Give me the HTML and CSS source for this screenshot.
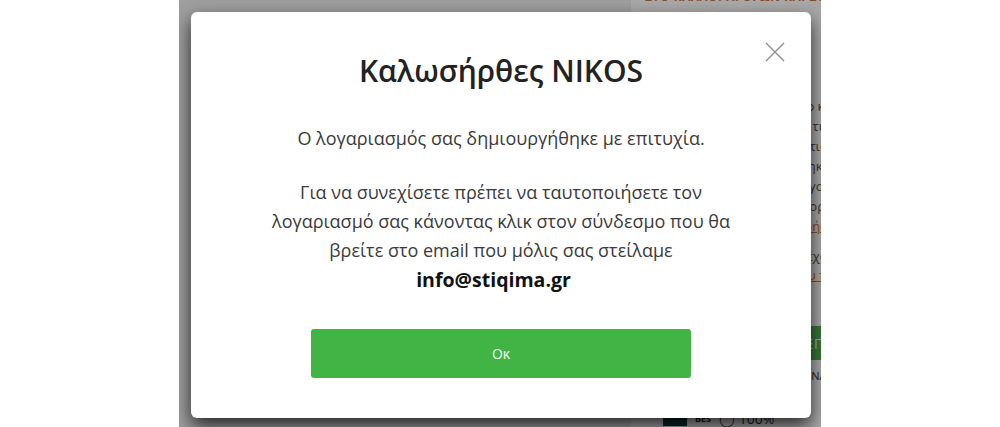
FILE: index.html
```html
<!DOCTYPE html>
<html lang="el">
<head>
<meta charset="utf-8">
<title>Καλωσήρθες</title>
<link rel="stylesheet" href="styles.css">
</head>
<body>
<div class="stage">
  <div class="page">
    <div class="main"></div>
    <aside class="sidebar">
      <div class="sb-head">ΣΤΟ ΚΑΛΑΘΙ ΑΓΟΡΩΝ ΚΑΙ ΣΤΑ ΑΓΑΠΗΜΕΝΑ</div>
      <div class="sb-text">
        <div class="sb-line">Με την εγγραφή σας στο κατάστημα με</div>
        <div class="sb-line">θα μπορείτε να βλέπετε τις παραγγελίες σας</div>
        <div class="sb-line">και να παρακολουθείτε τις αγορές των</div>
        <div class="sb-line">προϊόντων και να αποθηκεύετε τις αγορές σας</div>
        <div class="sb-line">ευκολότερα και πιο γρήγορα από τη λίστα στη</div>
        <div class="sb-line">να ολοκληρώνετε τις αγορές πιο γρήγορα στα</div>
        <div class="sb-line sb-link">Διαβάστε τους όρους χρήσης του</div>
        <div class="sb-line sb-gap">Έχω διαβάσει και αποδέχομαι τους όρους και</div>
        <div class="sb-line sb-link">την πολιτική απορρήτου του καταστήματος</div>
      </div>
      <div class="sb-btn">ΕΓΓΡΑΦΗ ΤΩΡΑ</div>
      <div class="sb-note">ΑΣΦΑΛΕΙΣ ΣΥΝΑΛΛΑΓΕΣ ΧΩΡΙΣ ΕΝ</div>
      <div class="sb-badges"><span class="badge-box"></span><span class="badge-txt">BES</span><span class="badge-pct">◯ 100%</span></div>
    </aside>
  </div>
  <div class="overlay"></div>
  <div class="modal">
    <button class="close" aria-label="Κλείσιμο">
      <svg width="20" height="20" viewBox="0 0 20 20"><path d="M1 1 L19 19 M19 1 L1 19" stroke="#8f8f8f" stroke-width="1.4" fill="none"/></svg>
    </button>
    <h2 class="title">Καλωσήρθες NIKOS</h2>
    <p class="msg">Ο λογαριασμός σας δημιουργήθηκε με επιτυχία.</p>
    <p class="msg msg2">Για να συνεχίσετε πρέπει να ταυτοποιήσετε τον<br>λογαριασμό σας κάνοντας κλικ στον σύνδεσμο που θα<br>βρείτε στο email που μόλις σας στείλαμε<br><strong class="email">info@stiqima.gr</strong></p>
    <button class="ok">Οκ</button>
  </div>
</div>
</body>
</html>
```
FILE: styles.css
```css
html, body {
  margin: 0;
  padding: 0;
  background: #ffffff;
}
body {
  font-family: "Open Sans", "Noto Sans", sans-serif;
}
.stage {
  position: relative;
  width: 642px;
  height: 427px;
  margin: 0 auto;
  overflow: hidden;
  background: #ffffff;
}
.page {
  display: flex;
  height: 100%;
}
.main {
  width: 452px;
  flex: none;
  background: #f0f0f0;
}
.sidebar {
  flex: 1;
  background: #ffffff;
  padding-left: 14px;
  white-space: nowrap;
  font-size: 13px;
  color: #444;
}
.sb-head {
  margin-top: -12px;
  color: #e0702a;
  font-weight: 700;
  font-size: 12px;
  letter-spacing: 0.5px;
}
.sb-text {
  margin-top: 91px;
  line-height: 20px;
  padding-left: 20px;
  color: #555;
}
.sb-link {
  color: #d9782e;
  text-decoration: underline;
}
.sb-gap {
  margin-top: 11px;
  line-height: 18px;
}
.sb-btn {
  margin-top: 41px;
  margin-left: 40px;
  height: 34px;
  line-height: 34px;
  background: #52b64f;
  color: #ffffff;
  font-size: 15px;
  padding-left: 120px;
  letter-spacing: 0.5px;
}
.sb-note {
  margin-top: 8px;
  padding-left: 100px;
  font-size: 11px;
  color: #333;
}
.sb-badges {
  margin-top: 26px;
  padding-left: 18px;
  display: flex;
  align-items: center;
  gap: 8px;
  font-size: 12px;
  color: #222;
}
.badge-box {
  display: inline-block;
  width: 24px;
  height: 14px;
  background: #0c3c3a;
  border-radius: 0 6px 0 0;
}
.badge-txt { font-weight: 700; font-size: 9px; }
.badge-pct { font-size: 14px; color: #333; }
.overlay {
  position: absolute;
  inset: 0;
  background: rgba(0, 0, 0, 0.34);
}
.modal {
  position: absolute;
  left: 12px;
  top: 12px;
  width: 620px;
  height: 406px;
  box-sizing: border-box;
  background: #ffffff;
  border-radius: 6px;
  box-shadow: 0 8px 18px rgba(0, 0, 0, 0.75);
  padding-top: 42px;
  text-align: center;
}
.close {
  position: absolute;
  top: 30px;
  right: 26px;
  width: 20px;
  height: 20px;
  padding: 0;
  border: 0;
  background: none;
  cursor: pointer;
}
.close svg { display: block; }
.title {
  margin: 0;
  font-size: 30px;
  line-height: 33px;
  font-weight: 600;
  color: #222222;
}
.msg {
  margin: 37px 0 0;
  font-size: 18px;
  line-height: 29px;
  color: #3a3a3a;
}
.msg2 {
  margin-top: 25px;
}
.email {
  font-size: 19.5px;
  font-weight: 700;
  color: #111111;
  padding-right: 15px;
}
.ok {
  display: block;
  margin: 34px auto 0;
  width: 380px;
  height: 49px;
  border: 0;
  border-radius: 3px;
  background: #42b446;
  color: #f2fff2;
  font-family: "Open Sans", "Noto Sans", sans-serif;
  font-size: 14px;
  cursor: pointer;
}
```
